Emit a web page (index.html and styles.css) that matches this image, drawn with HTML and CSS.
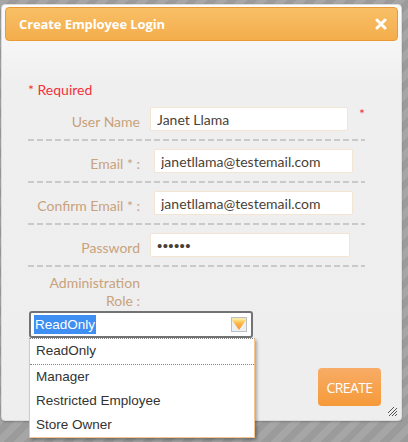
FILE: index.html
```html
<!DOCTYPE html>
<html>
<head>
<meta charset="utf-8">
<link rel="stylesheet" href="styles.css">
</head>
<body>
<div class="dialog">
  <div class="titlebar">
    <span class="title">Create Employee Login</span>
    <svg class="close" width="12" height="12" viewBox="0 0 12 12"><path d="M2 2L10 10M10 2L2 10" stroke="#fff" stroke-width="3" stroke-linecap="round"/></svg>
  </div>
  <div class="content">
    <div class="required">* Required</div>
    <div class="row">
      <label class="label">User Name</label>
      <input class="field" type="text" value="Janet Llama">
      <span class="star">*</span>
    </div>
    <div class="row">
      <label class="label">Email * :</label>
      <input class="field field-wide" type="text" value="janetllama@testemail.com">
    </div>
    <div class="row">
      <label class="label">Confirm Email * :</label>
      <input class="field field-wide" type="text" value="janetllama@testemail.com">
    </div>
    <div class="row">
      <label class="label">Password</label>
      <input class="field field-password" type="password" value="secret">
    </div>
    <div class="role-label">Administration<br>Role :</div>
    <div class="select-wrap">
      <div class="select">
        <span class="selected">ReadOnly</span>
        <svg class="arrow" width="16" height="15" viewBox="0 0 16 15">
          <defs>
            <linearGradient id="tri" x1="0" y1="0" x2="0" y2="1">
              <stop offset="0" stop-color="#fde07a"/>
              <stop offset="0.35" stop-color="#fbb64a"/>
              <stop offset="1" stop-color="#f6932e"/>
            </linearGradient>
          </defs>
          <rect x="0.5" y="0.5" width="15" height="14" fill="#eef0f2" stroke="#b9c0c6"/>
          <rect x="1" y="1" width="14" height="2" fill="#fbe7a0"/>
          <path d="M1 3H15L8 13Z" fill="url(#tri)"/>
        </svg>
      </div>
      <ul class="options">
        <li class="option option-first">ReadOnly</li>
        <li class="option">Manager</li>
        <li class="option">Restricted Employee</li>
        <li class="option">Store Owner</li>
      </ul>
    </div>
    <div class="footer">
      <button class="create">CREATE</button>
    </div>
  </div>
  <svg class="grip" width="12" height="12" viewBox="0 0 12 12"><path d="M11 3L3 11M11 6L6 11M11 9L9 11M8 2L2 8" stroke="#555" stroke-width="1"/></svg>
</div>
</body>
</html>
```

FILE: styles.css
```css
html, body {
  margin: 0;
  padding: 0;
}
body {
  width: 408px;
  height: 442px;
  overflow: hidden;
  background: repeating-linear-gradient(135deg, #a6a6a6 0 7px, #9b9b9b 7px 14px);
  font-family: Lato, "Open Sans", sans-serif;
}
.dialog {
  position: relative;
  box-sizing: border-box;
  width: 401px;
  height: 417px;
  margin: 4px 0 0 1px;
  padding: 2px 3px 0 3px;
  background: linear-gradient(#fbfbfb 0, #efefef 80px, #eeeeee 100%);
  border: 1px solid #dcdcdc;
  border-radius: 4px;
  box-shadow: 0 1px 2px rgba(0,0,0,0.2);
}
.titlebar {
  display: flex;
  align-items: center;
  justify-content: space-between;
  box-sizing: border-box;
  height: 34px;
  padding: 0 10px 0 13px;
  background: linear-gradient(#f8bf66, #f4ad4c);
  border: 1px solid #ea9a35;
  border-radius: 4px;
}
.title {
  color: #fff;
  font-family: "Open Sans", sans-serif;
  font-weight: 700;
  font-size: 13px;
  letter-spacing: -0.1px;
}
.close {
  display: block;
}
.content {
  padding: 40px 0 0 23px;
}
.required {
  color: #f0323c;
  font-size: 14px;
  line-height: 18px;
  height: 18px;
}
.row {
  display: flex;
  align-items: center;
  width: 337px;
  height: 40px;
  padding-bottom: 2px;
  background: repeating-linear-gradient(90deg, #c9c9c9 0 6px, transparent 6px 9px) bottom / 100% 2px no-repeat;
}
.label {
  width: 112px;
  flex: none;
  padding-top: 5px;
  text-align: right;
  color: #c9a27c;
  font-size: 14px;
}
.field {
  box-sizing: border-box;
  width: 200px;
  height: 24px;
  margin-left: 10px;
  padding: 0 6px;
  border: 1px solid #f3e4d3;
  border-radius: 2px;
  background: #fff;
  color: #4a3f36;
  font-family: Lato, "Open Sans", sans-serif;
  font-size: 14px;
  outline: none;
}
.field-wide {
  margin-left: 14px;
  width: 199px;
}
.field-password {
  font-family: "Liberation Sans", Arial, sans-serif;
  font-size: 15px;
  letter-spacing: 0.4px;
}
.star {
  align-self: flex-start;
  margin: 8px 0 0 11px;
  color: #f0323c;
  font-size: 14px;
  line-height: 13px;
}
.role-label {
  width: 112px;
  padding-top: 7px;
  text-align: right;
  color: #c9a27c;
  font-size: 14px;
  line-height: 18px;
}
.select-wrap {
  position: relative;
  margin: 1px 0 0 1px;
  width: 224px;
}
.select {
  display: flex;
  align-items: center;
  justify-content: space-between;
  box-sizing: border-box;
  height: 27px;
  padding: 0 4px 0 3px;
  border: 2px solid #737373;
  border-radius: 3px;
  background: #fff;
}
.selected {
  background: #3f8ef2;
  color: #fff;
  font-family: "Liberation Sans", Arial, sans-serif;
  font-size: 13.5px;
  line-height: 19px;
  padding: 0 1px;
}
.arrow {
  display: block;
}
.options {
  position: absolute;
  left: 0;
  top: 27px;
  box-sizing: border-box;
  width: 226px;
  margin: 0;
  padding: 0;
  list-style: none;
  background: #fff;
  border: 1px solid #f6c48c;
  border-top: 1px dotted #888;
  box-shadow: 2px 2px 3px rgba(0,0,0,0.3);
  z-index: 2;
}
.option {
  height: 24px;
  line-height: 23px;
  padding-left: 6px;
  color: #333;
  font-family: "Liberation Sans", Arial, sans-serif;
  font-size: 13.5px;
}
.option-first {
  height: 25px;
  border-bottom: 1px dotted #888;
}
.footer {
  display: flex;
  justify-content: flex-end;
  margin-top: 30px;
  padding-right: 17px;
}
.create {
  width: 63px;
  height: 38px;
  padding: 0;
  border: none;
  border-radius: 4px;
  background: linear-gradient(#f8ac66, #f59a39);
  color: #fff;
  font-family: "Open Sans", sans-serif;
  font-size: 14px;
  letter-spacing: -0.6px;
}
.grip {
  position: absolute;
  right: 3px;
  bottom: 3px;
}
```
